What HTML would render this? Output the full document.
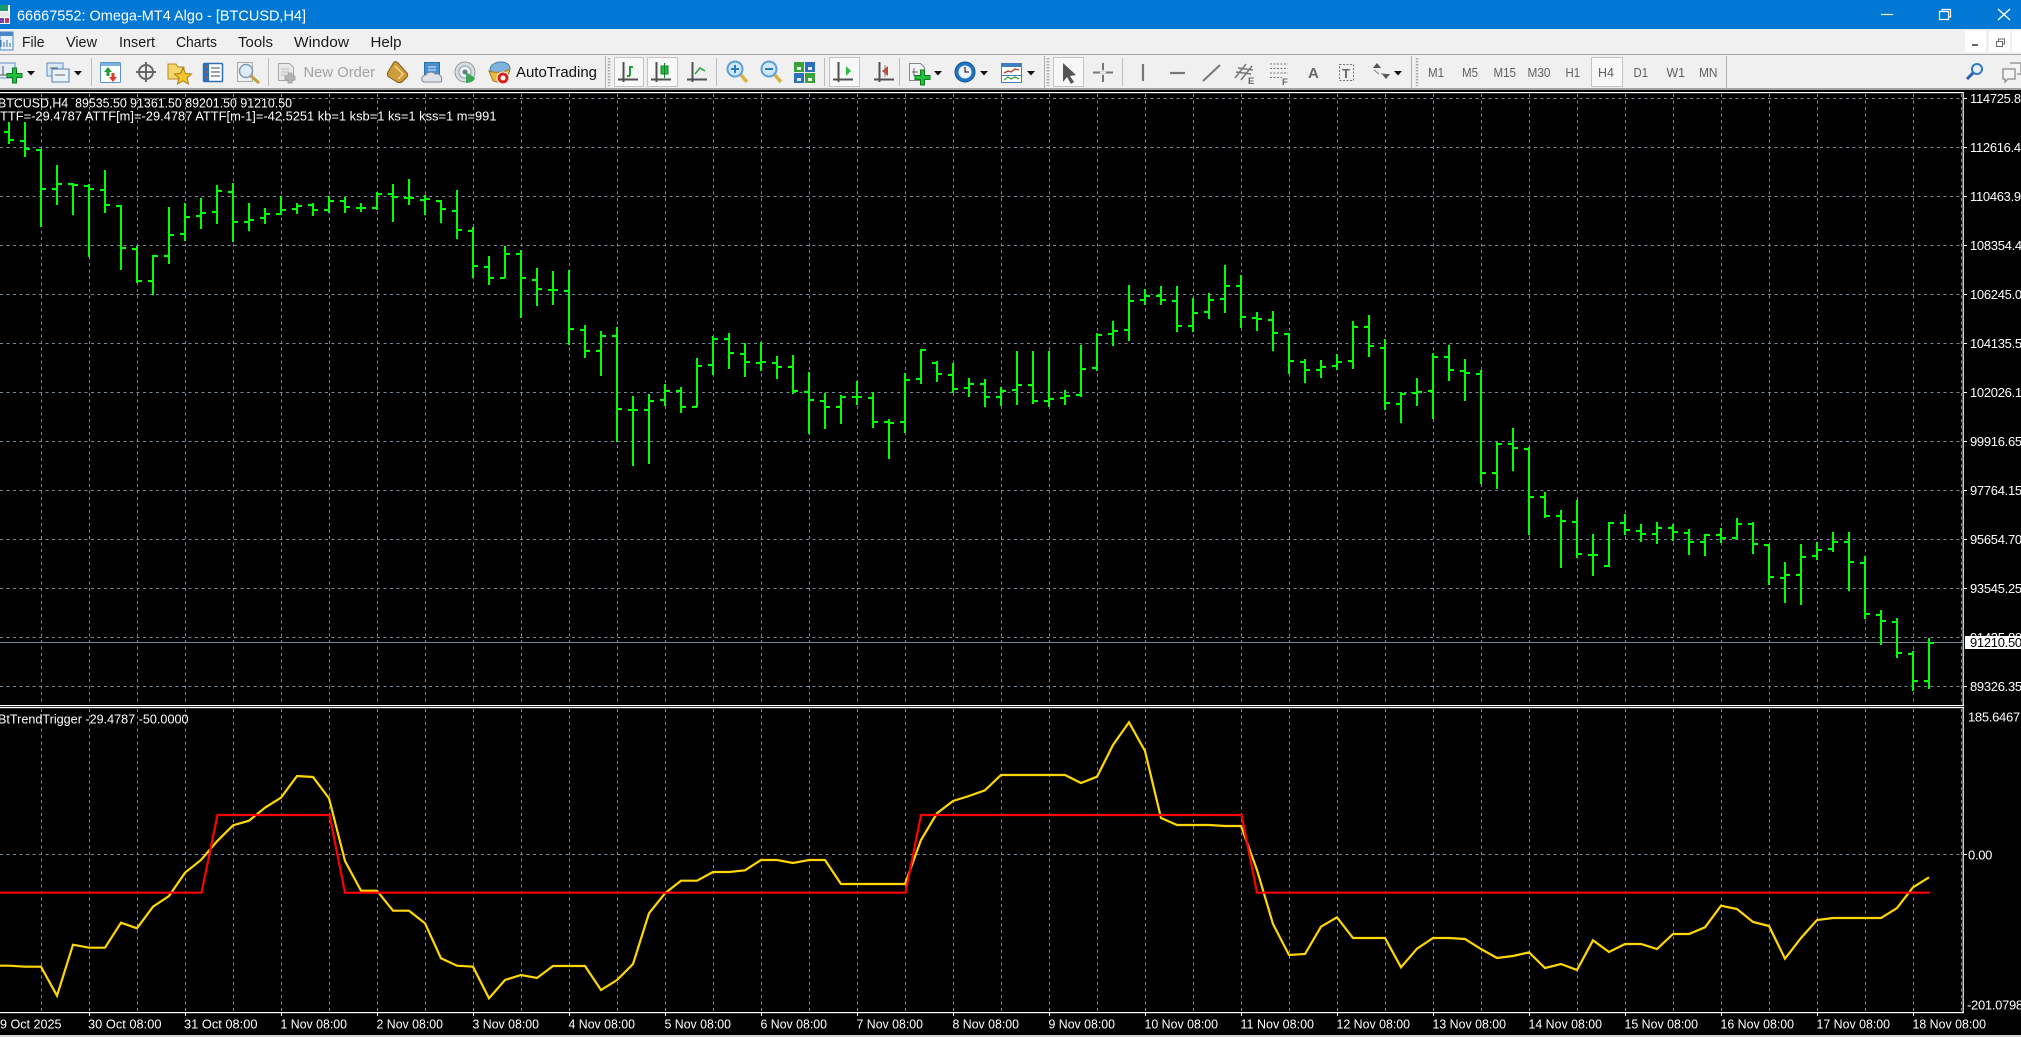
<!DOCTYPE html>
<html lang="en"><head><meta charset="utf-8"><title>66667552: Omega-MT4 Algo - [BTCUSD,H4]</title>
<style>html,body{margin:0;padding:0;background:#000;width:2021px;height:1037px;overflow:hidden}svg{display:block;position:absolute;left:0;top:0}text{font-family:"Liberation Sans",sans-serif;white-space:pre}.a{fill:#fff;font-size:13px}.p{fill:#fff;font-size:13px;letter-spacing:-.3px}.m{fill:#1a1a1a;font-size:14.5px}.f{fill:#5f5f5f;font-size:13px}.ax{fill:none;stroke:#505050;stroke-width:2}</style></head><body>
<svg width="2021" height="1037" viewBox="0 0 2021 1037" xmlns="http://www.w3.org/2000/svg">
<defs>
<g id="plus"><path d="M5.500 0h4v5.500H15v4H9.500V15h-4V9.500H0v-4h5.500z" fill="#1fc23a" stroke="#0d7a1f" stroke-width="1"/></g>
<path id="dd" d="M0 0h8l-4 4.500z" fill="#111"/>
<g id="axis"><path d="M9.500 5V25M4 22.500H24" fill="none" stroke="#505050" stroke-width="2"/></g>
</defs>
<rect width="2021" height="29" fill="#0078d4"/>
<rect y="29" width="2021" height="60" fill="#f0f0f0"/>
<rect y="54" width="2021" height="1" fill="#a6a6a6"/>
<rect y="88" width="2021" height="2" fill="#a0a0a0"/>
<rect y="90" width="2021" height="947" fill="#000"/>
<rect y="1035" width="2021" height="2" fill="#d4d4d4"/>
<!-- title bar -->
<rect x="0" y="5" width="10" height="19" fill="#fff"/><rect x="0" y="5" width="8" height="6" fill="#1d9a6c"/><rect x="0" y="12" width="9" height="5" fill="#e8e8e8"/><rect x="0" y="18" width="4" height="5" fill="#7a3fa0"/><rect x="5" y="18" width="4" height="5" fill="#c2386a"/>
<text x="17" y="20.500" fill="#fff" font-size="15" textLength="289" lengthAdjust="spacingAndGlyphs">66667552: Omega-MT4 Algo - [BTCUSD,H4]</text>
<path d="M1881 14.500H1893" stroke="#fff" stroke-width="1.200"/>
<path d="M1939.500 11.500h9v8h-9zM1942 11.500V9.500h8.500v7.500h-2" fill="none" stroke="#fff" stroke-width="1.200"/>
<path d="M1998 9L2010 20M2010 9L1998 20" stroke="#fff" stroke-width="1.300"/>
<!-- menu -->
<rect x="0" y="32" width="13" height="18" fill="#eaf2fb" stroke="#4a86c8"/><rect x="0" y="32" width="13" height="4" fill="#4a86c8"/><path d="M1 47V40M4 47V42M7 47V40M10 47V43" stroke="#3d6ea6"/>
<text class="m" x="22" y="47" textLength="22.500" lengthAdjust="spacingAndGlyphs">File</text>
<text class="m" x="66" y="47" textLength="31" lengthAdjust="spacingAndGlyphs">View</text>
<text class="m" x="119" y="47" textLength="36" lengthAdjust="spacingAndGlyphs">Insert</text>
<text class="m" x="176" y="47" textLength="41" lengthAdjust="spacingAndGlyphs">Charts</text>
<text class="m" x="238" y="47" textLength="35" lengthAdjust="spacingAndGlyphs">Tools</text>
<text class="m" x="294" y="47" textLength="55" lengthAdjust="spacingAndGlyphs">Window</text>
<text class="m" x="370.500" y="47" textLength="31" lengthAdjust="spacingAndGlyphs">Help</text>
<rect x="1965" y="31" width="21" height="21" fill="#fff"/><rect x="1989" y="31" width="21" height="21" fill="#fff"/><rect x="2012" y="31" width="9" height="21" fill="#fff"/>
<rect x="1972" y="44" width="6" height="2" fill="#666"/>
<path d="M1996.500 41.500h6v5h-6zM1998.500 41V39h6v5h-1.500" fill="none" stroke="#666"/>
<!-- toolbar separators -->
<path d="M91.500 58V86M268.500 58V86M716.500 58V86M824.500 58V86M899.500 58V86M1122.500 58V86" stroke="#bdbdbd"/>
<path d="M605.500 56V88M1044.500 56V88M1411.500 56V88M1726.500 56V88" stroke="#b0b0b0"/>
<path d="M609 58V86M1048 58V86M1417 58V86" stroke="#aaa" stroke-width="2.500" stroke-dasharray="1.500 1.500"/>
<!-- new chart -->
<rect x="-3" y="63" width="18" height="15" fill="#e4ecf7" stroke="#5f8fc4"/><path d="M3 66V75M0 75H11" stroke="#555"/><use href="#plus" x="7" y="68"/>
<use href="#dd" x="27" y="71"/>
<!-- profiles -->
<rect x="47" y="63" width="16" height="13" fill="#dce7f4" stroke="#5f8fc4"/><rect x="52" y="69" width="17" height="13" fill="#eaf1f9" stroke="#4f7fb4"/><path d="M50 68h8M55 75h10" stroke="#666"/>
<use href="#dd" x="74" y="71"/>
<!-- market watch -->
<rect x="100.500" y="62.500" width="20" height="20" rx="1" fill="#fff" stroke="#5a93cc"/><rect x="101" y="63" width="19" height="3" fill="#7eb2e3"/><path d="M108 67l-4 5h2.500v4h3v-4H112z" fill="#1e9e33"/><path d="M113 82l4-5h-2.500v-4h-3v4H109z" fill="#d8402b"/>
<!-- navigator -->
<circle cx="146" cy="72" r="7" fill="none" stroke="#666" stroke-width="2"/><path d="M146 62V82M136 72H156" stroke="#666" stroke-width="2"/>
<!-- favourites -->
<path d="M168 64h8l2 3h6v12h-16z" fill="#f4d66b" stroke="#b48a24"/><path d="M183 68l2.500 5.500 6 .5-4.500 4 1.500 6-5.500-3.200-5.500 3.200 1.500-6-4.500-4 6-.5z" fill="#f7c52d" stroke="#a97c12"/>
<!-- terminal -->
<rect x="203.500" y="63.500" width="19" height="18" rx="1" fill="#fff" stroke="#2d6fb5" stroke-width="1.500"/><rect x="204" y="64" width="5" height="17" fill="#2d6fb5"/><path d="M211 68h9M211 72h9M211 76h9" stroke="#444"/>
<path d="M207 66v2M207 71v2M207 76v2" stroke="#d84b3a" stroke-width="1.500"/>
<!-- tester -->
<rect x="237.500" y="62.500" width="15" height="19" fill="#f1f1f1" stroke="#aaa"/><circle cx="246" cy="71" r="6.500" fill="#dbeaf7" fill-opacity=".8" stroke="#7d9ab8" stroke-width="1.500"/><path d="M251 76l8 7" stroke="#c69c3a" stroke-width="3"/>
<!-- new order -->
<path d="M278.500 63.500h11l4 4v13h-15z" fill="#e9e9e9" stroke="#a5a5a5"/><path d="M281 69h8M281 72h8M281 75h6" stroke="#bdbdbd"/><path d="M288 74h4v3h3v4h-3v3h-4v-3h-3v-4h3z" fill="#b4b4b4" stroke="#989898" stroke-width=".7" transform="translate(0,-1)"/>
<text x="303.500" y="77" fill="#a3a3a3" font-size="14.500" textLength="71.500" lengthAdjust="spacingAndGlyphs">New Order</text>
<!-- signals -->
<path d="M394 62c2-1 3 0 4 1l9 10c1 2 1 3 0 4l-5 5c-2 1-3 1-5 0l-8-5c-2-1-2-3-1-5z" fill="#cf9c3c" stroke="#7d5a1a"/><path d="M395 66l8 8-5 5" fill="none" stroke="#f2d48a" stroke-width="1.500"/>
<!-- market -->
<path d="M424.500 62.500h15v12h-15z" fill="#4a8fd0" stroke="#2f6da8"/><path d="M428 67h8M428 70h8" stroke="#dfefff"/><path d="M425 82c-5 0-4-7 1-7 1-3 7-4 9-1 5-1 8 3 6 8z" fill="#dfe3e8" stroke="#7f8a96"/>
<!-- radar -->
<circle cx="465" cy="72" r="10" fill="#d7dde0" stroke="#8f9aa0"/><circle cx="465" cy="72" r="6" fill="#eef2f3" stroke="#8f9aa0"/><circle cx="465" cy="72" r="2.500" fill="#6e7a80"/><path d="M466 72v11c5 0 8-2 9-5z" fill="#3ba65a"/>
<!-- autotrading -->
<path d="M490 70c0-5 5-8 11-8s9 3 9 7l-3 3-15 1z" fill="#7fb3dc" stroke="#4a7fa8"/><path d="M489 71c5 2 15 2 21-2l-3 11-5 3-9-2z" fill="#e8b93f" stroke="#a37e1d"/><circle cx="503" cy="78" r="6" fill="#d9261c" stroke="#fff" stroke-width="1"/><circle cx="503" cy="78" r="2.500" fill="#fff"/>
<text x="516" y="77" fill="#111" font-size="14.500" textLength="81" lengthAdjust="spacingAndGlyphs">AutoTrading</text>
<!-- pressed buttons -->
<g fill="#f8f8f8" stroke="#c4c4c4"><rect x="614.500" y="57.500" width="29" height="29"/><rect x="647.500" y="57.500" width="30" height="29"/><rect x="829.500" y="57.500" width="30" height="29"/><rect x="1053.500" y="57.500" width="30" height="29"/><rect x="1591.500" y="57.500" width="31" height="29"/></g>
<!-- chart type icons -->
<use href="#axis" x="614" y="57"/><path d="M630 66V76M627 76h3M630 67h3" stroke="#1f9c34" stroke-width="2" fill="none"/>
<use href="#axis" x="647" y="57"/><rect x="661" y="66" width="7" height="8" fill="#22c13c" stroke="#177f2a"/><path d="M664.500 63V78" stroke="#177f2a"/>
<use href="#axis" x="683" y="57"/><path d="M695 74l5-6 5 3" fill="none" stroke="#2a9c3d" stroke-width="1.500"/>
<!-- zoom -->
<circle cx="735" cy="69" r="7.500" fill="#cfe7fb" stroke="#5a9fdc" stroke-width="2"/><path d="M731 69h8M735 65v8" stroke="#2f79c0" stroke-width="2"/><path d="M741 75l6 7" stroke="#d9b23f" stroke-width="3.500"/>
<circle cx="769" cy="69" r="7.500" fill="#cfe7fb" stroke="#5a9fdc" stroke-width="2"/><path d="M765 69h8" stroke="#2f79c0" stroke-width="2"/><path d="M775 75l6 7" stroke="#d9b23f" stroke-width="3.500"/>
<!-- tile -->
<rect x="794" y="62" width="10" height="10" fill="#3ba03e"/><rect x="805" y="62" width="10" height="10" fill="#2c6fbf"/><rect x="794" y="73" width="10" height="10" fill="#2c6fbf"/><rect x="805" y="73" width="10" height="10" fill="#3ba03e"/>
<rect x="797" y="67" width="4" height="3" fill="#e7f3e7"/><rect x="808" y="67" width="4" height="3" fill="#e3eefa"/><rect x="797" y="78" width="4" height="3" fill="#e3eefa"/><rect x="808" y="78" width="4" height="3" fill="#e7f3e7"/>
<!-- autoscroll, shift -->
<use href="#axis" x="829" y="57"/><path d="M846 66l5 5-5 5z" fill="#2bbd48"/>
<use href="#axis" x="870" y="57"/><path d="M888 66l-6 5 6 5z" fill="#c8452c"/><path d="M885 65V77" stroke="#7a7a7a"/>
<!-- indicators -->
<path d="M909.500 63.500h11l4 4v13h-15z" fill="#f3f3f3" stroke="#888"/><path d="M914 68v8M912 72h6" stroke="#666"/><use href="#plus" x="915" y="70"/>
<use href="#dd" x="934" y="71"/>
<!-- clock -->
<circle cx="965" cy="72" r="10" fill="#1e74c6" stroke="#0f4f90"/><circle cx="965" cy="72" r="6.500" fill="#eef4fa"/><path d="M965 67v5h4" fill="none" stroke="#333" stroke-width="1.300"/>
<use href="#dd" x="980" y="71"/>
<!-- template -->
<rect x="1001.500" y="63.500" width="20" height="19" fill="#fff" stroke="#3f7fc0"/><rect x="1002" y="64" width="19" height="3" fill="#3f7fc0"/><path d="M1004 73l4-2 3 1 4-3 4 1" fill="none" stroke="#b33a22" stroke-width="1.300"/><path d="M1004 80l4-3 3 2 4-2 4 2" fill="none" stroke="#3ba03e" stroke-width="1.300"/><path d="M1002 75.500h19" stroke="#3f7fc0"/>
<use href="#dd" x="1027" y="71"/>
<!-- tools -->
<path d="M1063 63l0 19 4-5 4 7 3-2-4-6 6-1z" fill="#555"/>
<path d="M1103 63V82M1093 72.500H1113" stroke="#777" stroke-width="2"/><path d="M1100 72.500h6M1103 70v5" stroke="#f0f0f0" stroke-width="1.500"/>
<path d="M1143 64V81" stroke="#777" stroke-width="2.200"/>
<path d="M1170 73H1185" stroke="#777" stroke-width="2.200"/>
<path d="M1203 81L1220 65" stroke="#777" stroke-width="2"/>
<path d="M1235 78l11-14M1241 80l11-14M1236 72l15 2M1238 68l15 2" fill="none" stroke="#777" stroke-width="1.500"/><text x="1248" y="84" fill="#666" font-size="9.500" font-weight="bold">E</text>
<path d="M1270 64h18M1270 68.500h18M1270 73h18M1270 77.500h12" stroke="#777" stroke-dasharray="2 1.500"/><text x="1282" y="85" fill="#666" font-size="9.500" font-weight="bold">F</text>
<text x="1308" y="78" fill="#666" font-size="15" font-weight="bold">A</text>
<rect x="1339.500" y="64.500" width="14" height="16" fill="none" stroke="#777" stroke-dasharray="2 1.500"/><text x="1342" y="78" fill="#666" font-size="13" font-weight="bold">T</text>
<path d="M1377 63l4 5h-8zM1386 79l4-5h-8z" fill="#555"/><path d="M1374 70l5 4M1381 74h4" stroke="#777"/>
<use href="#dd" x="1394" y="71"/>
<!-- timeframes -->
<text class="f" x="1428" y="77" textLength="16" lengthAdjust="spacingAndGlyphs">M1</text>
<text class="f" x="1462" y="77" textLength="16" lengthAdjust="spacingAndGlyphs">M5</text>
<text class="f" x="1493.500" y="77" textLength="22.500" lengthAdjust="spacingAndGlyphs">M15</text>
<text class="f" x="1527.500" y="77" textLength="23" lengthAdjust="spacingAndGlyphs">M30</text>
<text class="f" x="1565.500" y="77" textLength="14.500" lengthAdjust="spacingAndGlyphs">H1</text>
<text class="f" x="1598" y="77" textLength="16" lengthAdjust="spacingAndGlyphs">H4</text>
<text class="f" x="1633.500" y="77" textLength="14.500" lengthAdjust="spacingAndGlyphs">D1</text>
<text class="f" x="1666.500" y="77" textLength="18.500" lengthAdjust="spacingAndGlyphs">W1</text>
<text class="f" x="1699" y="77" textLength="18.500" lengthAdjust="spacingAndGlyphs">MN</text>
<!-- search, chat -->
<circle cx="1977" cy="69" r="5" fill="#e8f1fb" stroke="#3478c8" stroke-width="2"/><path d="M1973 73l-6 6" stroke="#2a5ea8" stroke-width="3"/>
<path d="M2010 63h11v11h-4M2003 69h12v10h-7l-3 3v-3h-2z" fill="#f4f4f4" stroke="#999" stroke-width="1.500"/>
<!-- chart frame -->
<rect y="92" width="1963" height="1.200" fill="#fff"/>
<rect x="1962.600" y="92" width="1.200" height="614" fill="#fff"/>
<rect y="705" width="1964" height="1.200" fill="#fff"/>
<rect y="707" width="1964" height="1.200" fill="#fff"/>
<rect x="1962.600" y="707" width="1.200" height="306" fill="#fff"/>
<rect y="1012" width="1964" height="1.200" fill="#fff"/>
<!-- grid -->
<path fill="none" stroke="#778899" stroke-width="1" stroke-dasharray="3 3.500" d="M41.500 94V705M41.500 709V1012M89.500 94V705M89.500 709V1012M137.500 94V705M137.500 709V1012M185.500 94V705M185.500 709V1012M233.500 94V705M233.500 709V1012M281.500 94V705M281.500 709V1012M329.500 94V705M329.500 709V1012M377.500 94V705M377.500 709V1012M425.500 94V705M425.500 709V1012M473.500 94V705M473.500 709V1012M521.500 94V705M521.500 709V1012M569.500 94V705M569.500 709V1012M617.500 94V705M617.500 709V1012M665.500 94V705M665.500 709V1012M713.500 94V705M713.500 709V1012M761.500 94V705M761.500 709V1012M809.500 94V705M809.500 709V1012M857.500 94V705M857.500 709V1012M905.500 94V705M905.500 709V1012M953.500 94V705M953.500 709V1012M1001.500 94V705M1001.500 709V1012M1049.500 94V705M1049.500 709V1012M1097.500 94V705M1097.500 709V1012M1145.500 94V705M1145.500 709V1012M1193.500 94V705M1193.500 709V1012M1241.500 94V705M1241.500 709V1012M1289.500 94V705M1289.500 709V1012M1337.500 94V705M1337.500 709V1012M1385.500 94V705M1385.500 709V1012M1433.500 94V705M1433.500 709V1012M1481.500 94V705M1481.500 709V1012M1529.500 94V705M1529.500 709V1012M1577.500 94V705M1577.500 709V1012M1625.500 94V705M1625.500 709V1012M1673.500 94V705M1673.500 709V1012M1721.500 94V705M1721.500 709V1012M1769.500 94V705M1769.500 709V1012M1817.500 94V705M1817.500 709V1012M1865.500 94V705M1865.500 709V1012M1913.500 94V705M1913.500 709V1012M1961.500 94V705M1961.500 709V1012"/>
<path fill="none" stroke="#778899" stroke-width="1" stroke-dasharray="3 3.500" d="M0 98.500H1961M0 147.500H1961M0 196.500H1961M0 245.500H1961M0 294.500H1961M0 343.500H1961M0 392.500H1961M0 441.500H1961M0 490.500H1961M0 539.500H1961M0 588.500H1961M0 637.500H1961M0 686.500H1961M0 854.500H1961"/>
<path d="M0 642.500H1963" stroke="#778899" stroke-width="1"/>
<!-- bars -->
<path fill="none" stroke="#00ff00" stroke-width="2" shape-rendering="crispEdges" d="M9 122V144M4 132H9M9 140H14M25 122V157M20 141H25M25 149H30M41 149V227M36 150H41M41 189H46M57 165V205M52 189H57M57 184H62M73 183V215M68 184H73M73 185H78M89 184V257M84 186H89M89 189H94M105 170V213M100 190H105M105 205H110M121 205V270M116 206H121M121 248H126M137 246V283M132 249H137M137 281H142M153 255V295M148 281H153M153 256H158M169 207V264M164 256H169M169 235H174M185 203V241M180 234H185M185 217H190M201 198V229M196 216H201M201 213H206M217 185V224M212 212H217M217 191H222M233 183V242M228 192H233M233 222H238M249 203V231M244 222H249M249 220H254M265 208V224M260 218H265M265 214H270M281 196V215M276 214H281M281 210H286M297 203V214M292 209H297M297 206H302M313 203V216M308 205H313M313 210H318M329 196V213M324 210H329M329 201H334M345 197V213M340 201H345M345 207H350M361 203V212M356 208H361M361 208H366M377 192V210M372 208H377M377 194H382M393 184V222M388 194H393M393 197H398M409 179V205M404 198H409M409 198H414M425 195V215M420 200H425M425 199H430M441 200V223M436 201H441M441 209H446M457 190V239M452 211H457M457 230H462M473 227V278M468 231H473M473 266H478
M489 256V285M484 267H489M489 278H494M505 246V278M500 278H505M505 254H510M521 250V318M516 254H521M521 278H526M537 268V306M532 280H537M537 289H542M553 271V305M548 290H553M553 290H558M569 270V345M564 291H569M569 329H574M585 325V358M580 330H585M585 351H590M601 331V376M596 351H601M601 336H606M617 327V442M612 336H617M617 409H622M633 396V466M628 410H633M633 410H638M649 394V464M644 410H649M649 401H654M665 384V406M660 400H665M665 391H670M681 387V413M676 391H681M681 407H686M697 358V407M692 407H697M697 366H702M713 336V375M708 365H713M713 339H718M729 333V369M724 339H729M729 353H734M745 343V377M740 354H745M745 362H750M761 342V371M756 363H761M761 362H766M777 356V379M772 363H777M777 367H782M793 355V394M788 367H793M793 391H798M809 372V434M804 392H809M809 400H814M825 393V429M820 401H825M825 407H830M841 395V424M836 407H841M841 397H846M857 381V405M852 397H857M857 397H862M873 392V428M868 398H873M873 422H878M889 419V459M884 422H889M889 423H894M905 373V433M900 422H905M905 380H910M921 349V384M916 379H921M921 350H926M937 361V382M932 363H937M937 374H942M953 363V393M948 375H953M953 389H958
M969 378V397M964 388H969M969 384H974M985 379V407M980 384H985M985 397H990M1001 387V406M996 397H1001M1001 391H1006M1017 351V405M1012 390H1017M1017 385H1022M1033 351V404M1028 385H1033M1033 401H1038M1049 351V407M1044 401H1049M1049 399H1054M1065 390V405M1060 398H1065M1065 396H1070M1081 345V397M1076 395H1081M1081 369H1086M1097 333V371M1092 368H1097M1097 335H1102M1113 321V346M1108 334H1113M1113 331H1118M1129 285V341M1124 330H1129M1129 301H1134M1145 289V305M1140 300H1145M1145 296H1150M1161 286V305M1156 296H1161M1161 300H1166M1177 286V332M1172 301H1177M1177 326H1182M1193 298V332M1188 326H1193M1193 313H1198M1209 293V319M1204 312H1209M1209 300H1214M1225 265V313M1220 299H1225M1225 286H1230M1241 275V328M1236 286H1241M1241 317H1246M1257 312V331M1252 318H1257M1257 319H1262M1273 311V351M1268 320H1273M1273 333H1278M1289 333V374M1284 334H1289M1289 361H1294M1305 359V383M1300 362H1305M1305 370H1310M1321 360V378M1316 370H1321M1321 367H1326M1337 354V370M1332 366H1337M1337 362H1342M1353 321V369M1348 361H1353M1353 327H1358M1369 315V357M1364 327H1369M1369 346H1374M1385 339V410M1380 348H1385M1385 403H1390M1401 392V423M1396 404H1401M1401 394H1406M1417 378V406M1412 393H1417M1417 392H1422M1433 353V419M1428 391H1433M1433 357H1438
M1449 345V381M1444 357H1449M1449 370H1454M1465 359V401M1460 371H1465M1465 373H1470M1481 370V484M1476 374H1481M1481 473H1486M1497 442V489M1492 473H1497M1497 444H1502M1513 428V471M1508 444H1513M1513 448H1518M1529 447V535M1524 449H1529M1529 497H1534M1545 492V518M1540 497H1545M1545 516H1550M1561 510V568M1556 516H1561M1561 521H1566M1577 500V558M1572 522H1577M1577 554H1582M1593 534V576M1588 555H1593M1593 555H1598M1609 522V567M1604 566H1609M1609 523H1614M1625 514V535M1620 523H1625M1625 530H1630M1641 524V542M1636 531H1641M1641 534H1646M1657 522V544M1652 534H1657M1657 528H1662M1673 524V541M1668 528H1673M1673 532H1678M1689 529V555M1684 533H1689M1689 542H1694M1705 534V556M1700 542H1705M1705 535H1710M1721 528V543M1716 535H1721M1721 538H1726M1737 518V539M1732 538H1737M1737 524H1742M1753 522V554M1748 524H1753M1753 544H1758M1769 544V585M1764 545H1769M1769 577H1774M1785 562V603M1780 578H1785M1785 575H1790M1801 544V605M1796 575H1801M1801 557H1806M1817 542V560M1812 556H1817M1817 550H1822M1833 532V552M1828 549H1833M1833 542H1838M1849 532V591M1844 542H1849M1849 562H1854M1865 556V619M1860 563H1865M1865 614H1870M1881 610V645M1876 615H1881M1881 621H1886M1897 618V658M1892 622H1897M1897 653H1902M1913 651V691M1908 654H1913M1913 681H1918M1929 638V689M1924 681H1929M1929 643H1934"/>
<!-- indicator -->
<polyline fill="none" stroke="#ffd700" stroke-width="2.200" points="0,965.700 9,965.700 25,966.700 41,966.700 57,995.700 73,944.700 89,947.700 105,947.700 121,922.700 137,928.300 153,906.700 169,896 185,872.700 201,860 217,841.300 233,825.300 249,820.700 265,807.700 281,797.700 297,776 313,777 329,798.300 345,861 361,890.700 377,890.700 393,910.700 409,910.700 425,923.300 441,958.300 457,965.700 473,966.700 489,998.300 505,980 521,975 537,978 553,966 569,966 585,966 601,990 617,980 633,964 649,913.300 665,893.300 681,880.700 697,880.700 713,872 729,872 745,870.300 761,860 777,860 793,863 809,860 825,860 841,884 857,884 873,884 889,884 905,884 921,840 937,813.300 953,801 969,796 985,790.300 1001,775 1017,775 1033,775 1049,775 1065,775 1081,783 1097,776.700 1113,745 1129,722.300 1145,751 1161,818 1177,825 1193,825 1209,825 1225,826 1241,826 1257,870 1273,924 1289,955 1305,954 1321,926.700 1337,917.300 1353,938 1369,938 1385,938 1401,967.300 1417,948.700 1433,938 1449,938 1465,939 1481,949 1497,958 1513,956 1529,952.300 1545,968 1561,964 1577,970 1593,940.300 1609,952 1625,944 1641,944 1657,949 1673,934 1689,934 1705,927.300 1721,905.700 1737,909 1753,922 1769,926 1785,958.700 1801,938 1817,920 1833,918 1849,918 1865,918 1881,918 1897,908 1913,887.300 1929,877.300"/>
<polyline fill="none" stroke="#ff0000" stroke-width="2.200" points="0,892.700 201.500,892.700 217.500,815 329.500,815 345,892.700 905.500,892.700 921,815 1241.500,815 1257,892.700 1930,892.700"/>
<!-- chart texts -->
<text class="a" x="-2" y="107.400" textLength="294" lengthAdjust="spacingAndGlyphs">BTCUSD,H4  89535.50 91361.50 89201.50 91210.50</text>
<text class="a" x="0" y="120.400" textLength="496.500" lengthAdjust="spacingAndGlyphs">TTF=-29.4787 ATTF[m]=-29.4787 ATTF[m-1]=-42.5251 kb=1 ksb=1 ks=1 kss=1 m=991</text>
<text class="a" x="-2" y="723.400" textLength="190.500" lengthAdjust="spacingAndGlyphs">BtTrendTrigger -29.4787 -50.0000</text>
<!-- axis ticks -->
<path stroke="#fff" stroke-width="1" d="M1964 98.500h3M1964 147.500h3M1964 196.500h3M1964 245.500h3M1964 294.500h3M1964 343.500h3M1964 392.500h3M1964 441.500h3M1964 490.500h3M1964 539.500h3M1964 588.500h3M1964 686.500h3M1964 854.500h3M89.500 1013v3M185.500 1013v3M281.500 1013v3M377.500 1013v3M473.500 1013v3M569.500 1013v3M665.500 1013v3M761.500 1013v3M857.500 1013v3M953.500 1013v3M1049.500 1013v3M1145.500 1013v3M1241.500 1013v3M1337.500 1013v3M1433.500 1013v3M1529.500 1013v3M1625.500 1013v3M1721.500 1013v3M1817.500 1013v3M1913.500 1013v3"/>
<!-- price labels -->
<text class="p" x="1970" y="103">114725.85</text>
<text class="p" x="1970" y="152">112616.40</text>
<text class="p" x="1970" y="201">110463.90</text>
<text class="p" x="1970" y="250">108354.45</text>
<text class="p" x="1970" y="299">106245.00</text>
<text class="p" x="1970" y="348">104135.55</text>
<text class="p" x="1970" y="397">102026.10</text>
<text class="p" x="1970" y="446">99916.65</text>
<text class="p" x="1970" y="495">97764.15</text>
<text class="p" x="1970" y="544">95654.70</text>
<text class="p" x="1970" y="593">93545.25</text>
<text class="p" x="1970" y="642">91435.80</text>
<text class="p" x="1970" y="691">89326.35</text>
<rect x="1965" y="636" width="56" height="13" fill="#fff"/>
<text x="1970" y="647" fill="#000" font-size="13" letter-spacing="-.3">91210.50</text>
<text class="p" x="1968" y="721.400">185.6467</text>
<text class="p" x="1968" y="859.400">0.00</text>
<text class="p" x="1967" y="1009.400">-201.0798</text>
<!-- time labels -->
<g lengthAdjust="spacingAndGlyphs">
<text class="a" x="0" y="1028.400" textLength="61.500" lengthAdjust="spacingAndGlyphs">9 Oct 2025</text>
<text class="a" x="88" y="1028.400" textLength="73.500" lengthAdjust="spacingAndGlyphs">30 Oct 08:00</text>
<text class="a" x="184" y="1028.400" textLength="73.500" lengthAdjust="spacingAndGlyphs">31 Oct 08:00</text>
<text class="a" x="280.500" y="1028.400" textLength="66.500" lengthAdjust="spacingAndGlyphs">1 Nov 08:00</text>
<text class="a" x="376.500" y="1028.400" textLength="66.500" lengthAdjust="spacingAndGlyphs">2 Nov 08:00</text>
<text class="a" x="472.500" y="1028.400" textLength="66.500" lengthAdjust="spacingAndGlyphs">3 Nov 08:00</text>
<text class="a" x="568.500" y="1028.400" textLength="66.500" lengthAdjust="spacingAndGlyphs">4 Nov 08:00</text>
<text class="a" x="664.500" y="1028.400" textLength="66.500" lengthAdjust="spacingAndGlyphs">5 Nov 08:00</text>
<text class="a" x="760.500" y="1028.400" textLength="66.500" lengthAdjust="spacingAndGlyphs">6 Nov 08:00</text>
<text class="a" x="856.500" y="1028.400" textLength="66.500" lengthAdjust="spacingAndGlyphs">7 Nov 08:00</text>
<text class="a" x="952.500" y="1028.400" textLength="66.500" lengthAdjust="spacingAndGlyphs">8 Nov 08:00</text>
<text class="a" x="1048.500" y="1028.400" textLength="66.500" lengthAdjust="spacingAndGlyphs">9 Nov 08:00</text>
<text class="a" x="1144.500" y="1028.400" textLength="73.500" lengthAdjust="spacingAndGlyphs">10 Nov 08:00</text>
<text class="a" x="1240.500" y="1028.400" textLength="73.500" lengthAdjust="spacingAndGlyphs">11 Nov 08:00</text>
<text class="a" x="1336.500" y="1028.400" textLength="73.500" lengthAdjust="spacingAndGlyphs">12 Nov 08:00</text>
<text class="a" x="1432.500" y="1028.400" textLength="73.500" lengthAdjust="spacingAndGlyphs">13 Nov 08:00</text>
<text class="a" x="1528.500" y="1028.400" textLength="73.500" lengthAdjust="spacingAndGlyphs">14 Nov 08:00</text>
<text class="a" x="1624.500" y="1028.400" textLength="73.500" lengthAdjust="spacingAndGlyphs">15 Nov 08:00</text>
<text class="a" x="1720.500" y="1028.400" textLength="73.500" lengthAdjust="spacingAndGlyphs">16 Nov 08:00</text>
<text class="a" x="1816.500" y="1028.400" textLength="73.500" lengthAdjust="spacingAndGlyphs">17 Nov 08:00</text>
<text class="a" x="1912.500" y="1028.400" textLength="73.500" lengthAdjust="spacingAndGlyphs">18 Nov 08:00</text>
</g>
</svg>
</body></html>
